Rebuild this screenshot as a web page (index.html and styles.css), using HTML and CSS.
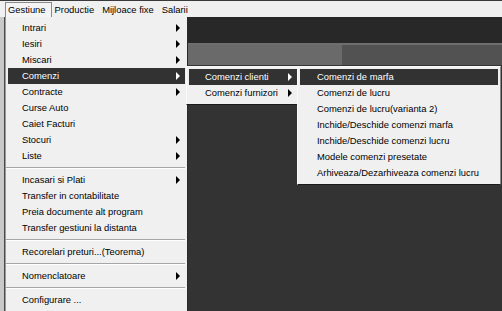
FILE: index.html
```html
<!DOCTYPE html>
<html lang="ro">
<head>
  <meta charset="UTF-8">
  <title>Gestiune</title>
  <link rel="stylesheet" href="styles.css">
</head>
<body>
  <div class="screen">
    <!-- bara de meniu -->
    <div class="menubar">
      <span class="bar-item open">Gestiune</span>
      <span class="bar-item">Productie</span>
      <span class="bar-item">Mijloace fixe</span>
      <span class="bar-item">Salarii</span>
    </div>

    <!-- fundalul aplicatiei -->
    <div class="workspace">
      <div class="edge"></div>
      <div class="desk">
        <div class="toolbar"></div>
        <div class="rule"></div>
        <div class="tabs">
          <div class="tab-a"></div>
          <div class="tab-b"></div>
        </div>
        <div class="canvas"></div>
      </div>
    </div>

    <!-- meniul Gestiune -->
    <ul class="menu main-menu">
      <li class="item sub">Intrari</li>
      <li class="item sub">Iesiri</li>
      <li class="item sub">Miscari</li>
      <li class="item sub active">Comenzi</li>
      <li class="item sub">Contracte</li>
      <li class="item">Curse Auto</li>
      <li class="item">Caiet Facturi</li>
      <li class="item sub">Stocuri</li>
      <li class="item sub">Liste</li>
      <li class="sep"></li>
      <li class="item sub">Incasari si Plati</li>
      <li class="item">Transfer in contabilitate</li>
      <li class="item">Preia documente alt program</li>
      <li class="item">Transfer gestiuni la distanta</li>
      <li class="sep"></li>
      <li class="item">Recorelari preturi...(Teorema)</li>
      <li class="sep"></li>
      <li class="item sub">Nomenclatoare</li>
      <li class="sep"></li>
      <li class="item">Configurare ...</li>
    </ul>

    <!-- submeniul Comenzi -->
    <ul class="menu sub-one">
      <li class="item sub active">Comenzi clienti</li>
      <li class="item sub">Comenzi furnizori</li>
    </ul>

    <!-- submeniul Comenzi clienti -->
    <ul class="menu sub-two">
      <li class="item active">Comenzi de marfa</li>
      <li class="item">Comenzi de lucru</li>
      <li class="item">Comenzi de lucru(varianta 2)</li>
      <li class="item">Inchide/Deschide comenzi marfa</li>
      <li class="item">Inchide/Deschide comenzi lucru</li>
      <li class="item">Modele comenzi presetate</li>
      <li class="item">Arhiveaza/Dezarhiveaza comenzi lucru</li>
    </ul>
  </div>
</body>
</html>
```

FILE: styles.css
```css
html, body {
  margin: 0;
  padding: 0;
  background: #333;
}

.screen {
  position: relative;
  width: 502px;
  height: 311px;
  overflow: hidden;
  display: flex;
  flex-direction: column;
  font-family: "Liberation Sans", Arial, sans-serif;
  font-size: 9.4px;
  color: #000;
}

/* bara de meniu */
.menubar {
  height: 16px;
  border-top: 1px solid #3a3a3a;
  background: #f0f0f0;
  display: flex;
  align-items: flex-end;
  padding-left: 5px;
}
.bar-item {
  height: 15px;
  line-height: 14px;
  padding: 0 4px 0 2px;
  box-sizing: border-box;
  border: 1px solid transparent;
  border-bottom: none;
}
.bar-item.open {
  border-color: #8a8a8a;
  background: #f4f4f4;
  padding-right: 5px;
}

/* fundal */
.workspace {
  flex: 1;
  display: flex;
}
.edge {
  width: 4px;
  background: #c9c9c9;
  border-right: 1px solid #4a4a4a;
}
.desk {
  flex: 1;
  display: flex;
  flex-direction: column;
  background: #333;
}
.toolbar {
  height: 26px;
  background: #282828;
}
.rule {
  height: 2px;
  background: #6e6e6e;
}
.tabs {
  height: 20px;
  display: flex;
}
.tab-a {
  width: 337px;
  background: #6a6a6a;
}
.tab-b {
  flex: 1;
  background: #525252;
}
.canvas {
  flex: 1;
}

/* meniuri */
.menu {
  position: absolute;
  margin: 0;
  list-style: none;
  background: #f0f0f0;
  box-sizing: border-box;
}
.main-menu {
  left: 5px;
  top: 17px;
  width: 183px;
  height: 300px;
  padding: 3px 2px 0 2px;
  border-left: 1px solid #9a9a9a;
  border-right: 1px solid #2a2a2a;
}
.sub-one {
  left: 186px;
  top: 66px;
  width: 114px;
  padding: 2px 2px 3px 2px;
  border: 1px solid #fafafa;
  border-right-color: #8a8a8a;
  border-bottom-color: #1a1a1a;
}
.sub-two {
  left: 297px;
  top: 66px;
  width: 204px;
  padding: 2px 2px 3px 2px;
  border: 1px solid #fafafa;
  border-right-color: #8a8a8a;
  border-bottom-color: #1a1a1a;
}

.item {
  position: relative;
  height: 16px;
  line-height: 16px;
  padding-left: 14px;
  white-space: nowrap;
}
.sub-one .item,
.sub-two .item {
  padding-left: 16px;
}
.sub-two .item {
  padding-left: 17px;
}
.item.active {
  background: #323232;
  color: #fff;
}
/* sageata submeniu */
.item.sub::after {
  content: "";
  position: absolute;
  right: 5px;
  top: 4px;
  border-left: 4px solid #000;
  border-top: 4px solid transparent;
  border-bottom: 4px solid transparent;
}
.item.sub.active::after {
  border-left-color: #fff;
}

.sep {
  height: 8px;
  position: relative;
}
.sep::before {
  content: "";
  position: absolute;
  left: -2px;
  right: 0;
  top: 3px;
  height: 1px;
  background: #a6a6a6;
  border-bottom: 1px solid #fff;
}
```
